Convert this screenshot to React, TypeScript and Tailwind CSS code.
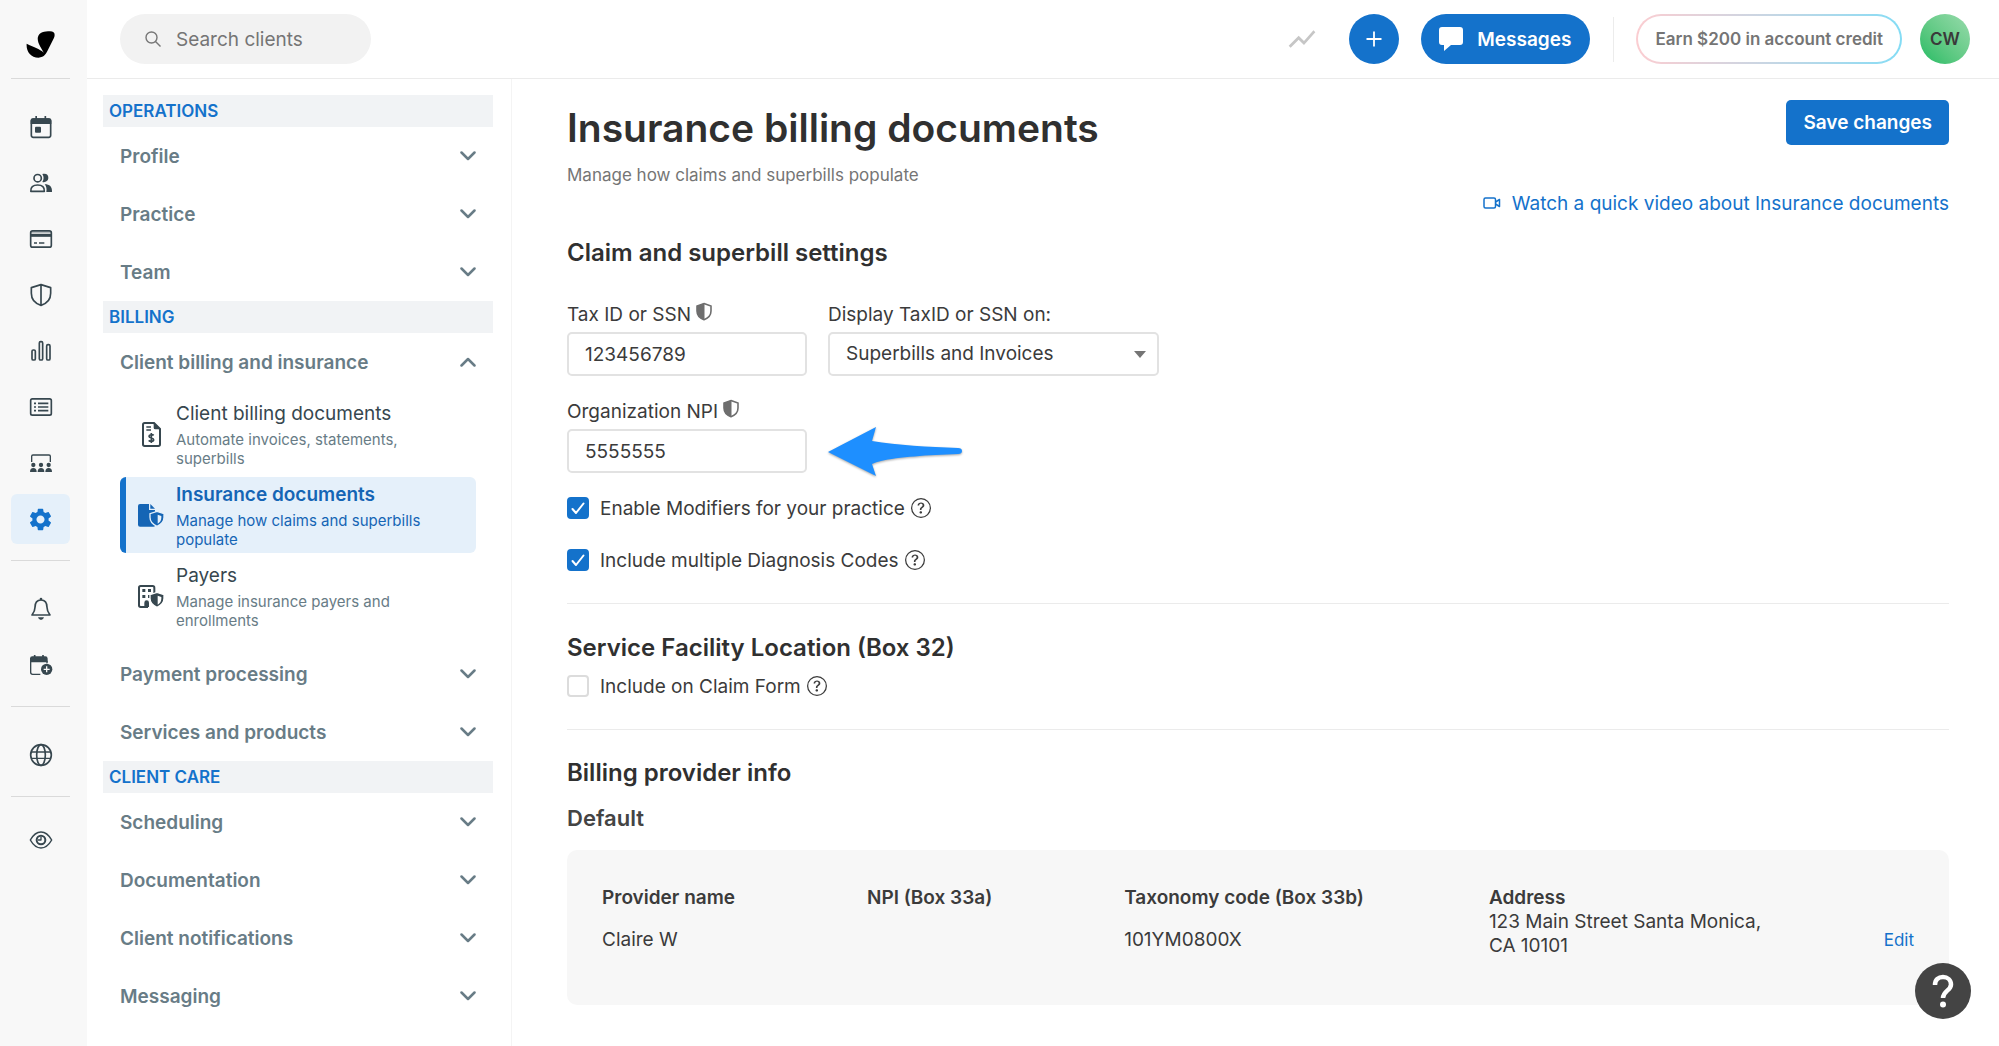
import type { ReactNode } from "react";
import { BsQuestionCircle } from "react-icons/bs";
import { MdSettings, MdShowChart } from "react-icons/md";

function Glyph({ children }: { children: ReactNode }) {
  return (
    <svg viewBox="0 0 66 66" className="size-[22px] overflow-visible" fill="none" stroke="currentColor" strokeWidth="5" strokeLinejoin="round" aria-hidden="true">
      {children}
    </svg>
  );
}

const CalendarIcon = () => (
  <Glyph>
    <rect x="4" y="9" width="58" height="55" rx="6" />
    <path d="M2 24V14q0-7 7-7h48q7 0 7 7v10z" fill="currentColor" stroke="none" />
    <path d="M18.500 0v10M46 0v10" />
    <rect x="15" y="32" width="18" height="18" rx="3" fill="currentColor" stroke="none" />
  </Glyph>
);

const PeopleIcon = () => (
  <Glyph>
    <circle cx="23" cy="18.500" r="11" />
    <path d="M2.500 58C1 45 9 39 23 39s21 6 20 19z" />
    <path d="M37 6c13-3 19 4 18 13s-9 13-18 11c5-7 5-17 0-24zM44 37c15 0 23 7 22 23H49c2-9 0-17-5-23z" fill="currentColor" stroke="none" />
  </Glyph>
);

const CardIcon = () => (
  <Glyph>
    <rect x="2" y="8.500" width="62" height="49" rx="6" />
    <path d="M2 22h62" strokeWidth="9" />
    <path d="M2 13h62" strokeWidth="5" opacity=".35" />
    <path d="M12 45h9M27 45h16" />
  </Glyph>
);

const ShieldIcon = () => (
  <Glyph>
    <path d="M33 2 62 11v17c0 18-12 31-29 36C16 59 4 46 4 28V11zM33 2v62" />
  </Glyph>
);

const BarsIcon = () => (
  <Glyph>
    <rect x="6" y="30" width="10" height="30" rx="4" />
    <rect x="28" y="5" width="10" height="55" rx="4" />
    <rect x="50" y="14" width="10" height="46" rx="4" />
  </Glyph>
);

const ListIcon = () => (
  <Glyph>
    <rect x="2" y="8.500" width="62" height="49" rx="5" />
    <path d="M12 22h6M24 22h31M12 33h6M24 33h31M12 44h6M24 44h31" />
  </Glyph>
);

const ClassIcon = () => (
  <Glyph>
    <path d="M5 30V13q0-4 4-4h48q4 0 4 4v17" strokeWidth="4" />
    {[10, 33, 56].map((x) => (
      <g key={x} fill="currentColor" stroke="none">
        <circle cx={x} cy="39" r="6.500" />
        <path d={`M${x - 10} 60q0-12 10-12t10 12z`} />
      </g>
    ))}
  </Glyph>
);

const BellIcon = () => (
  <Glyph>
    <path d="M33 6C20 6 15 16 15 28S11 45 6 51h54c-5-6-9-11-9-23S46 6 33 6z" />
    <circle cx="33" cy="3" r="4" fill="currentColor" stroke="none" />
    <path d="M24 58h18q-2 8-9 8t-9-8z" fill="currentColor" stroke="none" />
  </Glyph>
);

const CalendarPlusIcon = () => (
  <Glyph>
    <path d="M31 61H8q-6 0-6-6V12M51 20v8" strokeWidth="4" />
    <path d="M0 25V14q0-7 7-7h39q7 0 7 7v11z" fill="currentColor" stroke="none" />
    <path d="M14 3v10M39 3v10" />
    <circle cx="50" cy="46" r="17" fill="currentColor" stroke="none" />
    <path d="M50 37v18M41 46h18" stroke="#f8f8f8" strokeWidth="4" />
  </Glyph>
);

const GlobeIcon = () => (
  <Glyph>
    <circle cx="33" cy="33" r="31" />
    <ellipse cx="33" cy="33" rx="13" ry="31" />
    <path d="M4 24h58M4 43h58" strokeWidth="4" />
  </Glyph>
);

const EyeIcon = () => (
  <Glyph>
    <path d="M1 33C10 17 20 9 33 9s23 8 32 24C56 49 46 57 33 57S10 49 1 33z" strokeWidth="4.500" />
    <circle cx="33" cy="33" r="13" strokeWidth="6" />
    <path d="M33 24v9h-9" strokeWidth="4" />
  </Glyph>
);

const SettingsIcon = () => <MdSettings className="size-[27px]" aria-hidden="true" />;

const Logo = () => (
  <svg viewBox="0 0 88 80" className="h-[27px] w-[29px]" role="img" aria-label="Home">
    <path d="M2 38C0 60 14 80 38 80c18 0 24-14 30-26l16-32C90 9 87 0 73 0 56 0 40 2 36 18c-3 16 11 33 18 47C42 54 22 48 2 38z" fill="#000" />
  </svg>
);

const InvoiceIcon = () => (
  <svg viewBox="0 0 57 75" className="h-[25px] w-[19px]" fill="none" stroke="currentColor" strokeWidth="6" aria-hidden="true">
    <path d="M8 3h28L54 21v46q0 5-5 5H8q-5 0-5-5V8q0-5 5-5z" />
    <path d="M35 1 56 22H40q-5 0-5-5z" fill="currentColor" stroke="none" />
    <path d="M13 15h14M13 24h14" strokeWidth="4" />
    <path d="M35 40c-3-3-14-3-14 3 0 7 14 3 14 10 0 6-11 6-15 2M28 33v30" strokeWidth="5" />
  </svg>
);

const BADGE = "M57 22 78 29v11c0 13-9 22-21 27-12-5-21-14-21-27V29z";

const InsuranceIcon = () => (
  <svg viewBox="0 0 78 69" className="h-[23px] w-[26px]" aria-hidden="true">
    <path d="M6 0h27v18h18v47q0 3-5 3H6q-6 0-6-6V6q0-6 6-6z" fill="currentColor" />
    <path d="m37 0 14 14H37z" fill="currentColor" />
    <path d={BADGE} fill="currentColor" stroke="#e5f0fa" strokeWidth="4" />
    <path d="M59 32l11 4v5c0 8-4 13-11 18z" fill="#e5f0fa" />
  </svg>
);

const PayersIcon = () => (
  <svg viewBox="0 0 78 69" className="h-[23px] w-[26px]" aria-hidden="true">
    <path d="M30 66H8q-5 0-5-5V8q0-5 5-5h36q5 0 5 5v18" fill="none" stroke="currentColor" strokeWidth="6" />
    <path d="M13 12h9v9h-9zM30 12h9v9h-9zM13 30h9v9h-9zM30 30h9v9h-9zM19 66V53q0-7 7-7t7 7v13z" fill="currentColor" />
    <path d={BADGE} fill="currentColor" stroke="#fff" strokeWidth="4" />
    <path d="M59 32l11 4v5c0 8-4 13-11 18z" fill="#fff" />
  </svg>
);

const HalfShield = () => (
  <svg viewBox="0 0 16 20" className="h-5 w-4 self-start text-[#6e6e6e]" aria-label="Protected" role="img">
    <path d="M8 1.500 15 4v5c0 4-2.500 7-7 8.700C3.500 16 1 13 1 9V4z" fill="none" stroke="currentColor" strokeWidth="1.600" />
    <path d="M8.500 1v17C3.500 16.300 1 13.300 1 9V4z" fill="currentColor" />
  </svg>
);

function RailLink({ label, active, children }: { label: string; active?: boolean; children: ReactNode }) {
  return (
    <a href="#" aria-label={label} className={active ? "flex h-[50px] items-center justify-center rounded-md bg-[#e5f0fa] text-[#1472cb]" : "flex h-[50px] items-center justify-center rounded-md"}>
      {children}
    </a>
  );
}

function Rail() {
  return (
    <nav aria-label="Main" className="w-[87px] shrink-0 bg-[#f8f8f8] pr-[17px] pl-[11px] text-[#37474f]">
      <a href="#" className="flex h-[79px] items-center justify-center border-b border-[#dadada] pt-[11px]">
        <Logo />
      </a>
      <div className="mt-[23px] flex flex-col gap-[6px]">
        <RailLink label="Calendar"><CalendarIcon /></RailLink>
        <RailLink label="Clients"><PeopleIcon /></RailLink>
        <RailLink label="Billing"><CardIcon /></RailLink>
        <RailLink label="Insurance"><ShieldIcon /></RailLink>
        <RailLink label="Analytics"><BarsIcon /></RailLink>
        <RailLink label="Activity"><ListIcon /></RailLink>
        <RailLink label="Supervision"><ClassIcon /></RailLink>
        <RailLink label="Settings" active><SettingsIcon /></RailLink>
      </div>
      <div className="mt-4 flex flex-col gap-[6px] border-t border-[#dadada] pt-[23px]">
        <RailLink label="Reminders"><BellIcon /></RailLink>
        <RailLink label="Requests"><CalendarPlusIcon /></RailLink>
      </div>
      <div className="mt-4 border-t border-[#dadada] pt-[23px]">
        <RailLink label="Website"><GlobeIcon /></RailLink>
      </div>
      <div className="mt-4 border-t border-[#dadada] pt-[18px]">
        <RailLink label="Preview"><EyeIcon /></RailLink>
      </div>
    </nav>
  );
}

function Header() {
  return (
    <header className="flex h-[79px] items-start border-b border-[#ebebeb] pt-[14px] pr-[29px] pl-[33px]">
      <div className="flex h-[50px] w-[251px] items-center gap-[15px] rounded-full bg-[#f2f2f2] pl-[25px]">
        <svg viewBox="0 0 16 16" className="size-4 text-[#777]" fill="none" stroke="currentColor" strokeWidth="1.400" aria-hidden="true">
          <circle cx="6.500" cy="6.500" r="5.500" />
          <path d="m10.500 10.500 5 5" />
        </svg>
        <input type="search" aria-label="Search clients" placeholder="Search clients" className="w-[170px] bg-transparent pt-[2px] text-[19px] outline-none placeholder:text-[#757575]" />
      </div>
      <div className="ml-auto flex h-[50px] items-center">
        <a href="#" aria-label="Analytics" className="mr-[31px] text-[#c6c6c6]">
          <MdShowChart className="size-8" />
        </a>
        <button type="button" aria-label="Create" className="mr-[22px] flex size-[50px] items-center justify-center rounded-full bg-[#1472cb] text-white">
          <svg viewBox="0 0 16 16" className="size-4" stroke="currentColor" strokeWidth="1.800" aria-hidden="true">
            <path d="M8 .5v15M.5 8h15" />
          </svg>
        </button>
        <button type="button" className="mr-[23px] flex h-[50px] items-center gap-[14px] rounded-full bg-[#1472cb] pr-[19px] pl-[18px] text-[19px] font-semibold text-white">
          <svg viewBox="0 0 24 24" className="size-6" fill="currentColor" aria-hidden="true">
            <path d="M3 0h18q3 0 3 3v12q0 3-3 3h-9l-7 6v-6H3q-3 0-3-3V3q0-3 3-3z" />
          </svg>
          <span className="pt-[2px]">Messages</span>
        </button>
        <span className="mr-[22px] h-[45px] w-px bg-[#ececec]" />
        <button type="button" className="mr-[18px] h-[50px] rounded-full bg-linear-to-r from-[#fbcdd1] to-[#83dcf5] p-[2px]">
          <span className="flex h-full items-center rounded-full bg-white px-[17px] pt-[2px] text-[17px] font-semibold text-[#757575]">Earn $200 in account credit</span>
        </button>
        <button type="button" className="size-[50px] rounded-full bg-linear-to-tr from-[#13bb63] to-[#97dbac] pt-[2px] text-[17px] font-semibold text-[#3a3a3a]">CW</button>
      </div>
    </header>
  );
}

const SectionTitle = ({ children }: { children: ReactNode }) => (
  <h2 className="flex h-8 items-center bg-[#f1f3f5] pt-[2px] pl-[6px] text-[17px] font-semibold text-[#1472cb]">{children}</h2>
);

function MenuRow({ label, open }: { label: string; open?: boolean }) {
  return (
    <button type="button" aria-expanded={!!open} className="flex h-[58px] w-full items-center justify-between px-[17px] text-[19px] font-semibold text-[#687c86]">
      <span className="pt-[2px]">{label}</span>
      <svg viewBox="0 0 16 10" className="h-[10px] w-4" fill="none" stroke="currentColor" strokeWidth="2.500" strokeLinecap="round" strokeLinejoin="round" aria-hidden="true">
        <path d={open ? "m1.500 8.500 6.500-6.500 6.500 6.500" : "m1.500 1.500 6.500 6.500 6.500-6.500"} />
      </svg>
    </button>
  );
}

function SubItem({ icon, title, text, active }: { icon: ReactNode; title: string; text: string; active?: boolean }) {
  return (
    <a href="#" className={active ? "flex rounded-md border-l-[6px] border-[#1472cb] bg-[#e5f0fa] pt-[6px] pb-1 text-[#1565b5]" : "flex rounded-md border-l-[6px] border-transparent pt-[6px] pb-1 text-[#37474f]"}>
      <span className="flex w-[50px] shrink-0 items-center justify-center pb-[2px]">{icon}</span>
      <span className="flex flex-col gap-1 pr-3">
        <span className={active ? "text-[19px] leading-6 font-semibold" : "text-[19px] leading-6"}>{title}</span>
        <span className={active ? "text-[15px] leading-[19px]" : "text-[15px] leading-[19px] text-[#687c86]"}>{text}</span>
      </span>
    </a>
  );
}

function Sidebar() {
  return (
    <aside className="w-[425px] shrink-0 border-r border-[#f4f4f4] pt-4 pr-[18px] pl-4">
      <SectionTitle>OPERATIONS</SectionTitle>
      <MenuRow label="Profile" />
      <MenuRow label="Practice" />
      <MenuRow label="Team" />
      <SectionTitle>BILLING</SectionTitle>
      <MenuRow label="Client billing and insurance" open />
      <div className="flex flex-col gap-[5px] px-[17px] pt-[5px] pb-[11px]">
        <SubItem icon={<InvoiceIcon />} title="Client billing documents" text="Automate invoices, statements, superbills" />
        <SubItem icon={<InsuranceIcon />} title="Insurance documents" text="Manage how claims and superbills populate" active />
        <SubItem icon={<PayersIcon />} title="Payers" text="Manage insurance payers and enrollments" />
      </div>
      <MenuRow label="Payment processing" />
      <MenuRow label="Services and products" />
      <SectionTitle>CLIENT CARE</SectionTitle>
      <MenuRow label="Scheduling" />
      <MenuRow label="Documentation" />
      <MenuRow label="Client notifications" />
      <MenuRow label="Messaging" />
    </aside>
  );
}

function Check({ id, label, checked }: { id: string; label: string; checked?: boolean }) {
  return (
    <div className="flex h-6 items-center">
      <span className="grid">
        <input id={id} type="checkbox" defaultChecked={checked} className="peer col-start-1 row-start-1 size-[22px] appearance-none rounded-[4px] border-2 border-[#dcdcdc] bg-white checked:border-[#1472cb] checked:bg-[#1472cb]" />
        <svg viewBox="0 0 22 22" className="pointer-events-none col-start-1 row-start-1 hidden size-[22px] peer-checked:block" fill="none" stroke="#fff" strokeWidth="2" strokeLinecap="round" strokeLinejoin="round" aria-hidden="true">
          <path d="m5.500 12 3.500 4 7.500-9.500" />
        </svg>
      </span>
      <label htmlFor={id} className="mr-[6px] ml-[11px] pt-[2px] text-[19px]">{label}</label>
      <BsQuestionCircle className="size-5" aria-hidden="true" />
    </div>
  );
}

const fieldClass = "h-[44px] rounded-[5px] border-2 border-[#e2e2e2] bg-white px-4 text-[19px]";
const h2Class = "pt-[2px] text-[24px] leading-[30px] font-semibold text-[#303030]";

function Field({ id, label, value }: { id: string; label: string; value: string }) {
  return (
    <div className="flex flex-col gap-[6px]">
      <div className="flex h-6 items-center gap-[5px] text-[19px]">
        <label htmlFor={id} className="pt-[2px]">{label}</label>
        <HalfShield />
      </div>
      <input id={id} defaultValue={value} className={`${fieldClass} w-[240px]`} />
    </div>
  );
}

function Arrow() {
  return (
    <svg viewBox="0 0 134 50" className="-mb-1 h-[50px] w-[134px] drop-shadow-[0_1px_1px_rgba(0,0,0,0.35)]" aria-hidden="true">
      <path d="M0 25 48 0 44 14C70 18 100 20 130 21q4 0 4 3t-4 3C100 28 70 30 53 34q-5 1-9 3l4 12z" fill="#1e8fff" />
    </svg>
  );
}

function Providers() {
  return (
    <section className="mt-[18px] rounded-[10px] bg-[#f7f7f7] px-[35px] pt-[35px] pb-[47px]">
      <table className="w-full table-fixed text-left text-[19px] leading-6">
        <thead>
          <tr className="h-[25px] [&>th]:p-0 [&>th]:align-bottom [&>th]:font-semibold">
            <th scope="col" className="w-[20.2%]">Provider name</th>
            <th scope="col" className="w-[19.6%]">NPI (Box 33a)</th>
            <th scope="col" className="w-[27.8%]">Taxonomy code (Box 33b)</th>
            <th scope="col">Address</th>
            <th scope="col" aria-label="Actions" className="w-[80px]" />
          </tr>
        </thead>
        <tbody>
          <tr className="align-top">
            <td className="pt-[18px]">Claire W</td>
            <td />
            <td className="pt-[18px]">101YM0800X</td>
            <td>
              <div className="max-w-[290px]">123 Main Street Santa Monica, CA 10101</div>
            </td>
            <td className="pt-[18px] text-right">
              <a href="#" className="text-[17px] text-[#1472cb]">Edit</a>
            </td>
          </tr>
        </tbody>
      </table>
    </section>
  );
}

function Content() {
  return (
    <main className="min-w-0 flex-1 pt-[21px] pr-[50px] pb-10 pl-[55px] text-[#3b3b3b]">
      <div className="flex justify-between">
        <div className="flex flex-col gap-[11px] pt-1">
          <h1 className="text-[39px] leading-[48px] font-semibold text-[#303030]">Insurance billing documents</h1>
          <p className="text-[17px] leading-6 text-[#757575]">Manage how claims and superbills populate</p>
        </div>
        <div className="flex flex-col items-end gap-[43px]">
          <button type="button" className="h-[45px] rounded-[5px] bg-[#1472cb] px-[17px] pt-[2px] text-[19px] font-semibold text-white">Save changes</button>
          <a href="#" className="flex items-center gap-[11px] text-[19px] leading-7 text-[#1472cb]">
            <svg viewBox="0 0 18 12" className="h-3 w-[18px]" fill="none" stroke="currentColor" strokeWidth="1.500" strokeLinejoin="round" aria-hidden="true">
              <rect x="1" y="1" width="11.500" height="10" rx="1.500" />
              <path d="M12.500 5 16.500 2.500v7L12.500 7" />
            </svg>
            <span className="pt-[2px]">Watch a quick video about Insurance documents</span>
          </a>
        </div>
      </div>

      <section className="mt-[18px] border-b border-[#ebebeb] pb-[31px]">
        <h2 className={h2Class}>Claim and superbill settings</h2>
        <div className="mt-[34px] flex gap-[21px]">
          <Field id="tax-id" label="Tax ID or SSN" value="123456789" />
          <div className="flex flex-col gap-[6px]">
            <label htmlFor="display-on" className="flex h-6 items-center pt-[2px] text-[19px]">Display TaxID or SSN on:</label>
            <div className="grid items-center">
              <select id="display-on" className={`${fieldClass} col-start-1 row-start-1 w-[331px] appearance-none`}>
                <option>Superbills and Invoices</option>
              </select>
              <svg viewBox="0 0 12 7" className="pointer-events-none col-start-1 row-start-1 mr-[13px] h-[7px] w-3 justify-self-end text-[#757575]" fill="currentColor" aria-hidden="true">
                <path d="M0 0h12L6 7z" />
              </svg>
            </div>
          </div>
        </div>
        <div className="mt-[23px] flex items-end gap-[21px]">
          <Field id="npi" label="Organization NPI" value="5555555" />
          <Arrow />
        </div>
        <div className="mt-[23px] flex flex-col gap-7">
          <Check id="modifiers" label="Enable Modifiers for your practice" checked />
          <Check id="diagnosis" label="Include multiple Diagnosis Codes" checked />
        </div>
      </section>

      <section className="border-b border-[#ebebeb] pt-[27px] pb-[31px]">
        <h2 className={h2Class}>Service Facility Location (Box 32)</h2>
        <div className="mt-[11px]">
          <Check id="claim-form" label="Include on Claim Form" />
        </div>
      </section>

      <section className="pt-[26px]">
        <h2 className={h2Class}>Billing provider info</h2>
        <h3 className="mt-4 text-[22px] leading-7 font-semibold text-[#444]">Default</h3>
        <Providers />
      </section>
    </main>
  );
}

export default function App() {
  return (
    <div className="flex min-h-screen bg-white font-['Inter',sans-serif]">
      <Rail />
      <div className="flex min-w-0 flex-1 flex-col">
        <Header />
        <div className="flex flex-1">
          <Sidebar />
          <Content />
        </div>
      </div>
      <button type="button" aria-label="Help" className="fixed right-7 bottom-[27px] flex size-14 items-center justify-center rounded-full bg-[#444] text-white">
        <svg viewBox="0 0 22 34" className="h-[34px] w-[22px]" fill="none" stroke="currentColor" strokeWidth="4.500" aria-hidden="true">
          <path d="M3 11C3 5.500 6.500 3 11 3s8 3 8 7.500c0 6-8 6.500-8 13.500" />
          <circle cx="11" cy="30.500" r="3" fill="currentColor" stroke="none" />
        </svg>
      </button>
    </div>
  );
}
